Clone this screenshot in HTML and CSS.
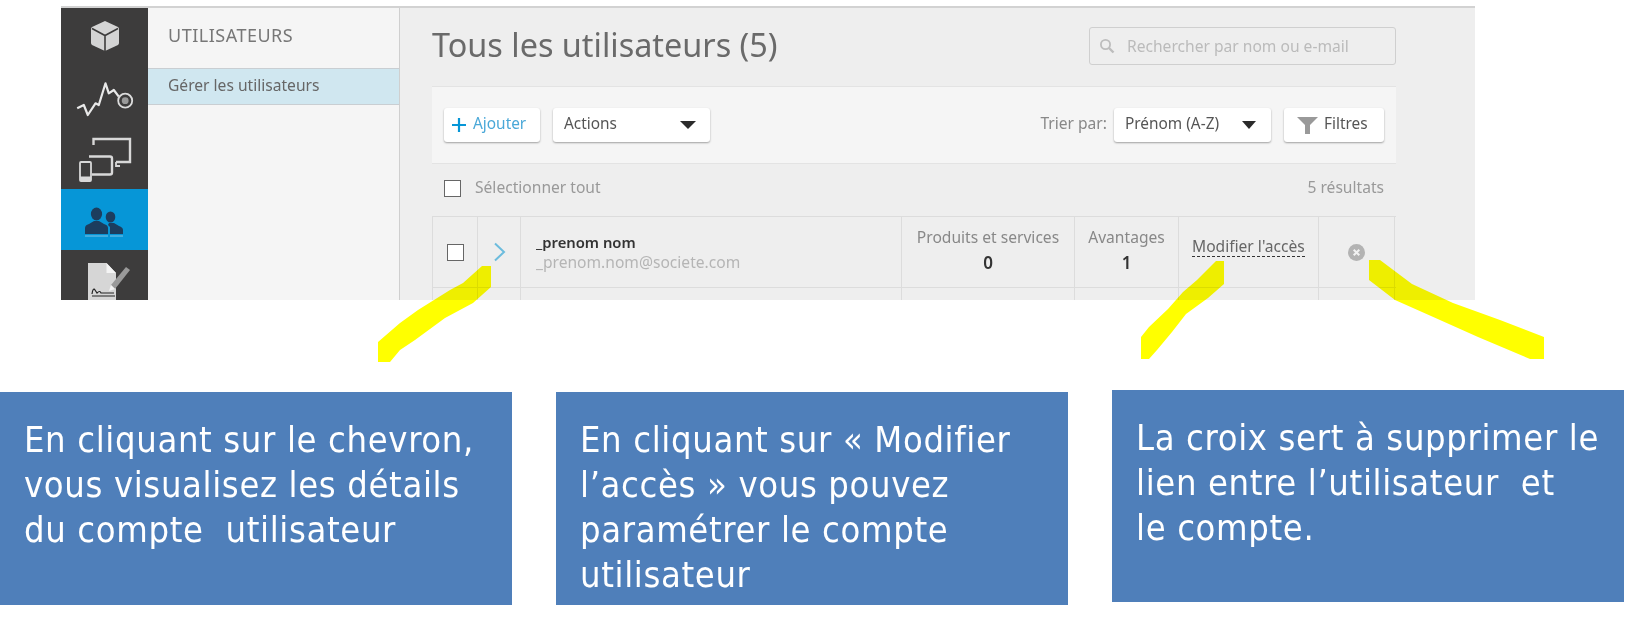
FILE: index.html
```html
<!DOCTYPE html>
<html lang="fr">
<head>
<meta charset="utf-8">
<title>Utilisateurs</title>
<link rel="stylesheet" href="styles.css">
</head>
<body>
<div class="shot">
  <nav class="rail">
    <div class="rail-item rail-cube">
      <svg width="30" height="32" viewBox="0 0 30 32"><path d="M15 1 28 7Q29 8 29 9V23Q29 24 28 25L15 31 2 25Q1 24 1 23V9Q1 8 2 7Z" fill="#d4d4d4"/><path d="M2 8.5 15 15.5 28 8.5M15 15.5V31" fill="none" stroke="#3d3c3c" stroke-width="1.6"/></svg>
    </div>
    <div class="rail-item rail-graph">
      <svg width="60" height="40" viewBox="0 0 60 40"><path d="M2.2 28.3 8.8 25 12.8 35 20.5 23.3 23.8 25 30.5 3.3 33.8 13.3 38.8 10 43.8 16.7" fill="none" stroke="#e8e8e8" stroke-width="2.2" stroke-linejoin="round"/><circle cx="50.2" cy="20.7" r="7" fill="none" stroke="#dcdcdc" stroke-width="1.8"/><circle cx="50.2" cy="20.7" r="3.4" fill="#9a9a9a"/></svg>
    </div>
    <div class="rail-item rail-devices">
      <svg width="56" height="46" viewBox="0 0 56 46"><g fill="none" stroke="#d8d8d8"><path d="M16.5 8V2H53V25H39" stroke-width="2.4"/><path d="M39 25V29H43" stroke-width="1.8"/><path d="M12 19.5H33Q35 19.5 35 21.5V35.5Q35 37.5 33 37.5H15" stroke-width="2.4"/><rect x="3" y="25" width="11" height="19" rx="1" stroke-width="1.8" fill="#3d3c3c"/></g><path d="M3 39.5H14V44H3Z" fill="#d8d8d8"/></svg>
    </div>
    <div class="rail-item rail-active">
      <svg width="40" height="32" viewBox="0 0 40 32"><g fill="#1c3d5e"><ellipse cx="11.5" cy="8" rx="5.6" ry="6.5"/><path d="M0 28V22Q0 19 4 18L9 15H14L19 18Q23 19 23 22V28Z"/><ellipse cx="25.5" cy="11" rx="4.8" ry="5.6"/><path d="M25 28V21L23 19 24 17H29L34 20Q38 21.5 38 24V28Z"/></g><path d="M0 30H23M25 30H38" stroke="#7fc3e8" stroke-width="1"/></svg>
    </div>
    <div class="rail-item rail-doc">
      <svg width="52" height="40" viewBox="0 0 52 40"><path d="M9 0H27.5L37 10V40H9Z" fill="#d6d6d6"/><path d="M27.5 0V10H37Z" fill="#f4f4f4"/><path d="M32 22 47 4 51 7 36 26Z" fill="#9a9a9a"/><path d="M30 28 32 22 36 26Z" fill="#f4f4f4"/><path d="M13 31Q14 24 16 27T18 30Q21 27 22 30H35M13 33H36" fill="none" stroke="#222" stroke-width="1.2"/></svg>
    </div>
  </nav>
  <aside class="panel">
    <h2 class="panel-title">UTILISATEURS</h2>
    <div class="panel-link">Gérer les utilisateurs</div>
  </aside>
  <main class="main">
    <header class="main-head">
      <h1 class="title">Tous les utilisateurs (5)</h1>
      <div class="search">
        <svg width="16" height="16" viewBox="0 0 16 16"><circle cx="6.5" cy="6.5" r="4.6" fill="none" stroke="#bdbdbd" stroke-width="1.8"/><path d="M10 10 14.5 14.5" stroke="#bdbdbd" stroke-width="2.4"/></svg>
        <span>Rechercher par nom ou e-mail</span>
      </div>
    </header>
    <div class="toolbar">
      <button class="btn btn-add"><svg width="14" height="14" viewBox="0 0 14 14"><path d="M7 0V14M0 7H14" stroke="#0696d7" stroke-width="2.2"/></svg><span>Ajouter</span></button>
      <button class="btn btn-actions"><span>Actions</span><i class="caret"></i></button>
      <span class="spacer"></span>
      <span class="sort-label">Trier par:</span>
      <button class="btn btn-sort"><span>Prénom (A-Z)</span><i class="caret caret-small"></i></button>
      <button class="btn btn-filter"><svg width="21" height="17" viewBox="0 0 21 17"><path d="M0 0H21L13 8V17H8V8Z" fill="#999"/></svg><span>Filtres</span></button>
    </div>
    <div class="select-row">
      <span class="check"></span>
      <span class="select-all">Sélectionner tout</span>
      <span class="spacer"></span>
      <span class="count">5 résultats</span>
    </div>
    <div class="row">
      <div class="cell c-check"><span class="check"></span></div>
      <div class="cell c-chev"><svg width="13" height="20" viewBox="0 0 13 20"><path d="M2 1.5 11 10 2 18.5" fill="none" stroke="#6cbcdd" stroke-width="2"/></svg></div>
      <div class="cell c-name"><div class="name">_prenom nom</div><div class="email">_prenom.nom@societe.com</div></div>
      <div class="cell c-prod"><div class="stat-label">Produits et services</div><div class="stat-value">0</div></div>
      <div class="cell c-adv"><div class="stat-label">Avantages</div><div class="stat-value">1</div></div>
      <div class="cell c-mod"><span class="modify">Modifier l'accès</span></div>
      <div class="cell c-del"><svg width="17" height="17" viewBox="0 0 17 17"><circle cx="8.5" cy="8.5" r="8.5" fill="#b3b3b3"/><path d="M5.7 5.7 11.3 11.3M11.3 5.7 5.7 11.3" stroke="#f2f2f2" stroke-width="2"/></svg></div>
    </div>
    <div class="row row-next">
      <div class="cell c-check"></div><div class="cell c-chev"></div><div class="cell c-name"></div><div class="cell c-prod"></div><div class="cell c-adv"></div><div class="cell c-mod"></div><div class="cell c-del"></div>
    </div>
  </main>
</div>
<section class="notes">
  <p class="note">En cliquant sur le chevron, vous visualisez les détails du compte&nbsp; utilisateur</p>
  <p class="note">En cliquant sur « Modifier l’accès » vous pouvez paramétrer le compte utilisateur</p>
  <p class="note note-up">La croix sert à supprimer le lien entre l’utilisateur&nbsp; et<br>le compte.</p>
</section>
<svg class="marks" width="1633" height="619" viewBox="0 0 1633 619">
  <path d="M378 362V342L400 323 418 310 450 290 463 283 482 266H491V287L473 303 445 318 415 340 400 350 390 362Z"/>
  <path d="M1216 261H1224V284L1208 298 1186 314 1172 332 1157 350 1149 359H1141V337L1149 327 1168 309 1183 292 1197 280Z"/>
  <path d="M1369 260H1380L1412 284 1453 303 1500 320 1544 337V359H1530L1478 337 1431 316 1395 300 1369 280Z"/>
</svg>
</body>
</html>
```
FILE: styles.css
```css
* { box-sizing: border-box; }
html, body { margin: 0; padding: 0; background: #fff; }
body { width: 1633px; height: 619px; overflow: hidden; position: relative; font-family: "Noto Sans", "Open Sans", sans-serif; }

.shot { display: flex; width: 1414px; height: 294px; margin: 6px 0 0 61px; border-top: 2px solid #d2d2d2; overflow: hidden; background: #eee; }

.rail { width: 87px; flex: none; background: #3d3c3c; display: flex; flex-direction: column; }
.rail-item { display: flex; align-items: center; justify-content: center; }
.rail-cube { height: 54px; padding-top: 2px; }
.rail-graph { height: 58px; padding-top: 18px; }
.rail-devices { height: 69px; padding-top: 10px; }
.rail-active { height: 61px; background: #0696d7; padding-top: 5px; }
.rail-doc { height: 50px; align-items: flex-start; padding-top: 13px; }

.panel { width: 252px; flex: none; background: #f5f5f5; border-right: 1px solid #cfcfcf; }
.panel-title { margin: 0; height: 60px; padding: 15px 0 0 20px; font-size: 18px; letter-spacing: .5px; line-height: 24px; font-weight: 400; color: #777; }
.panel-link { height: 37px; padding-left: 20px; font-size: 15.6px; line-height: 33px; color: #666; background: #d0e7f0; border-top: 1px solid #c9ced2; border-bottom: 1px solid #c9ced2; }

.main { flex: 1; padding-left: 32px; padding-right: 79px; background: #eee; }
.main-head { height: 78px; display: flex; align-items: flex-start; justify-content: space-between; }
.title { margin: 14px 0 0; font-size: 32.4px; line-height: 44px; font-weight: 400; color: #6a6a6a; }
.search { width: 307px; height: 38px; margin-top: 19px; display: flex; align-items: center; gap: 12px; padding-left: 9px; border: 1px solid #cfcfcf; border-radius: 3px; font-size: 15.6px; color: #bbb; }

.toolbar { height: 78px; display: flex; align-items: center; padding: 0 12px; background: #f5f5f5; border-top: 1px solid #e3e3e3; border-bottom: 1px solid #e3e3e3; }
.spacer { flex: 1; }
.btn { height: 34px; padding: 0; display: flex; align-items: center; background: #fff; border: 0; border-radius: 3px; box-shadow: 0 1px 2px rgba(0,0,0,.35); font: inherit; font-size: 15.4px; color: #555; }
.btn span { margin-bottom: 4px; }
.btn-add { width: 96px; padding-left: 8px; gap: 7px; color: #4aa8d8; }
.btn-actions { width: 157px; margin-left: 13px; padding: 0 14px 0 11px; justify-content: space-between; }
.caret { width: 0; height: 0; border-left: 8px solid transparent; border-right: 8px solid transparent; border-top: 8px solid #2b2b2b; }
.caret-small { border-left-width: 7px; border-right-width: 7px; border-top-width: 8px; }
.sort-label { font-size: 15.6px; color: #888; margin: 0 7px 4px 0; }
.btn-sort { width: 157px; padding: 0 15px 0 11px; justify-content: space-between; }
.btn-filter { width: 100px; margin-left: 13px; padding-left: 13px; gap: 6px; }

.select-row { height: 52px; display: flex; align-items: center; padding: 0 12px; font-size: 15.6px; color: #999; }
.select-row .check { margin-bottom: 4px; }
.select-all, .count { margin-bottom: 6px; }
.check { display: block; width: 17px; height: 17px; background: #fff; border: 1px solid #666; }
.select-all { margin-left: 14px; }

.row { height: 71px; display: flex; border-top: 1px solid #dcdcdc; }
.cell { display: flex; align-items: center; justify-content: center; border-left: 1px solid #dcdcdc; flex: none; }
.c-check { width: 45px; }
.c-chev { width: 43px; }
.c-name { width: 381px; flex-direction: column; align-items: flex-start; padding: 0 0 2px 15px; }
.c-prod { width: 173px; flex-direction: column; padding-bottom: 2px; }
.c-adv { width: 104px; flex-direction: column; padding-bottom: 2px; }
.c-mod { width: 140px; justify-content: flex-start; padding: 0 0 12px 13px; }
.c-del { width: 77px; border-right: 1px solid #dcdcdc; }
.name { font-size: 14.8px; line-height: 22px; font-weight: 600; color: #333; }
.email { font-size: 15.6px; line-height: 19px; color: #b5b5b5; }
.stat-label { font-size: 15.6px; line-height: 24px; color: #888; }
.stat-value { font-size: 17px; line-height: 28px; font-weight: 600; color: #333; }
.modify { font-size: 15.6px; line-height: 20px; color: #666; border-bottom: 1px dashed #333; }

.notes { display: flex; align-items: flex-start; gap: 44px; margin-top: 92px; }
.note { flex: none; width: 512px; height: 213px; margin: 0; padding: 25px 24px 0; background: #4f7fba; color: #fff; font-family: "DejaVu Sans Condensed", "DejaVu Sans", sans-serif; font-stretch: condensed; font-size: 36px; letter-spacing: .65px; line-height: 45px; }
.note-up { margin-top: -2px; height: 212px; padding-right: 0; }

.marks { position: absolute; left: 0; top: 0; mix-blend-mode: multiply; pointer-events: none; }
.marks path { fill: #ff0; }
```
